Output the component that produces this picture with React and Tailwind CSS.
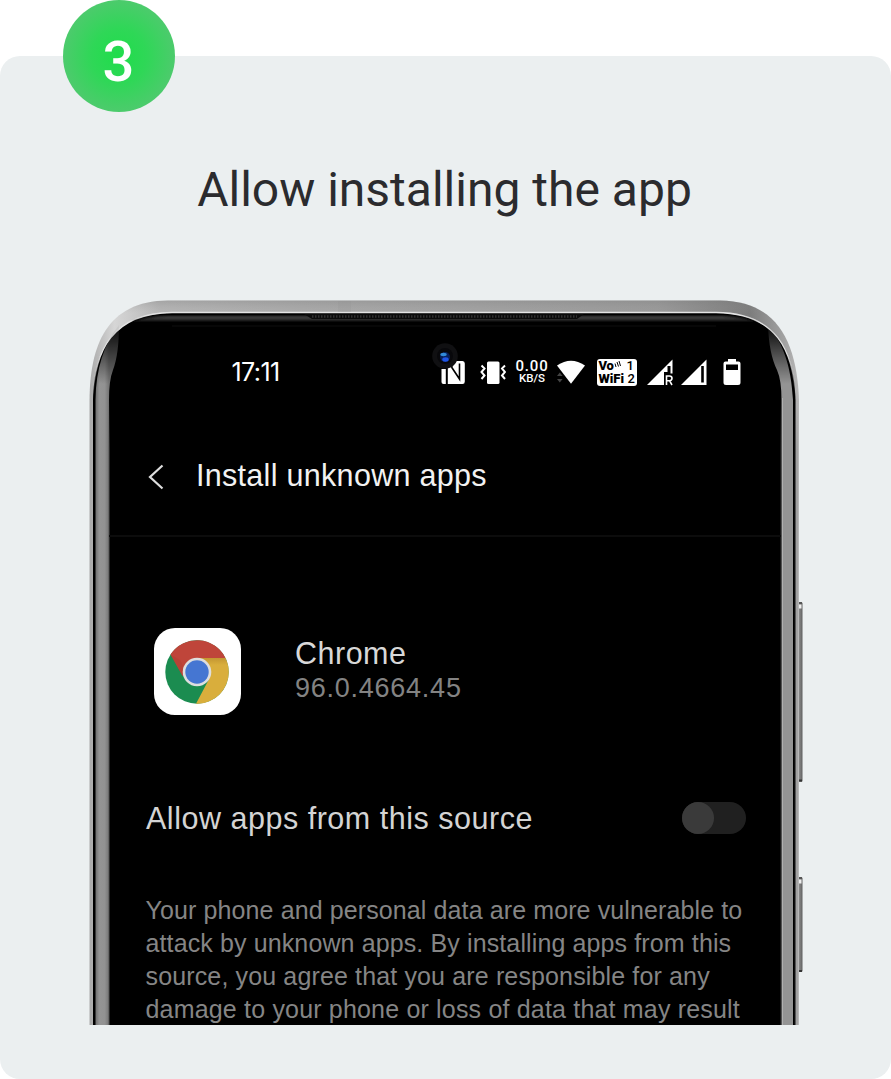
import React from "react";

function PhoneFrame() {
  return (
    <svg className="absolute inset-0 h-full w-full" viewBox="88 300 716 725" aria-hidden="true">
      <defs>
        <linearGradient id="rim" x1="0" x2="1">
          <stop offset="0" stopColor="#aaa" />
          <stop offset="0.035" stopColor="#d6d6d6" />
          <stop offset="0.1" stopColor="#b6b6b6" />
          <stop offset="0.3" stopColor="#aaaaaa" />
          <stop offset="0.8" stopColor="#9a9a9a" />
          <stop offset="0.93" stopColor="#7c7c7c" />
          <stop offset="0.98" stopColor="#a2a2a2" />
          <stop offset="1" stopColor="#b8b8b8" />
        </linearGradient>
        <linearGradient id="topShade" x1="0" y1="300" x2="0" y2="316" gradientUnits="userSpaceOnUse">
          <stop offset="0" stopColor="#777" stopOpacity="0.3" />
          <stop offset="0.8" stopColor="#999" stopOpacity="0" />
        </linearGradient>
        <linearGradient id="sideLeft" x1="95" x2="109" y1="0" y2="0" gradientUnits="userSpaceOnUse">
          <stop offset="0" stopColor="#6a6a6a" />
          <stop offset="0.3" stopColor="#949494" />
          <stop offset="0.7" stopColor="#929292" />
          <stop offset="1" stopColor="#747474" />
        </linearGradient>
        <linearGradient id="fade" x1="0" y1="322" x2="0" y2="384" gradientUnits="userSpaceOnUse">
          <stop offset="0" stopColor="#fff" stopOpacity="0" />
          <stop offset="1" stopColor="#fff" />
        </linearGradient>
        <mask id="sideMask" maskUnits="userSpaceOnUse" x="88" y="300" width="716" height="725">
          <rect x="88" y="300" width="716" height="725" fill="url(#fade)" />
        </mask>
        <linearGradient id="lineFade" x1="0" y1="395" x2="0" y2="450" gradientUnits="userSpaceOnUse">
          <stop offset="0" stopColor="#555" stopOpacity="0" />
          <stop offset="1" stopColor="#555" />
        </linearGradient>
        <linearGradient id="edge" x1="0" y1="312" x2="0" y2="396" gradientUnits="userSpaceOnUse">
          <stop offset="0" stopColor="#e4e4e4" />
          <stop offset="0.5" stopColor="#e0e0e0" />
          <stop offset="1" stopColor="#bbb" stopOpacity="0" />
        </linearGradient>
        <linearGradient id="glass" x1="0" y1="316" x2="0" y2="323" gradientUnits="userSpaceOnUse">
          <stop offset="0" stopColor="#505050" />
          <stop offset="1" stopColor="#000" />
        </linearGradient>
        <filter id="soft"><feGaussianBlur stdDeviation="1" /></filter>
        <linearGradient id="key" x1="0" x2="1">
          <stop offset="0" stopColor="#c4c4c4" />
          <stop offset="0.45" stopColor="#858585" />
          <stop offset="1" stopColor="#606060" />
        </linearGradient>
      </defs>
      <rect x="797" y="602" width="5.5" height="180" rx="1.5" fill="url(#key)" />
      <rect x="798" y="602" width="4" height="2" fill="#555" />
      <rect x="799" y="604.5" width="2.5" height="4" fill="#eee" />
      <rect x="798" y="779.5" width="4" height="2" fill="#333" />
      <rect x="797" y="877" width="5.5" height="95" rx="1.5" fill="url(#key)" />
      <rect x="798" y="877" width="4" height="2" fill="#555" />
      <rect x="799" y="879.5" width="2.500" height="4" fill="#eee" />
      <rect x="798" y="970" width="4" height="2" fill="#333" />
      <path d="M89.500 1026V400C90 346 106 301 168 300.500H720C780 301 797 346 799 400V1026Z" fill="url(#rim)" />
      <path d="M89.500 400C90 346 106 301 168 300.500H720C780 301 797 346 799 400Z" fill="url(#topShade)" />
      <path d="M93 1026V400C94 350 113 313 172 313H716C776 313 794 350 795.500 400V1026Z" fill="#000" />
      <path d="M93 400C94 350 113 313 172 312.500H716C776 313 794 350 795.500 400" fill="none" stroke="url(#edge)" strokeWidth="1.300" />
      <g mask="url(#sideMask)">
        <path d="M95.500 1026V400C96 368 104 344 119 325Q119 354 113 370Q109 380 109 400V1026Z" fill="url(#sideLeft)" />
        <path d="M793 1026V400C791 364 783 344 768 325Q769 354 777 370Q781.500 380 781.500 400V1026Z" fill="#949494" />
        <path d="M782.500 1026V398" stroke="#b0b0b0" strokeWidth="1" />
      </g>
      <path d="M109 1026V395M781.200 1026V395" stroke="url(#lineFade)" strokeWidth="1" />
      <path d="M795.300 1026V395" stroke="url(#lineFade)" strokeWidth="0.800" />
      <path d="M797 1026V395" stroke="url(#lineFade)" strokeWidth="1" opacity="0.4" />
      <path d="M132 322C144 317 158 316 174 316H716C734 316 748 318 758 323Z" fill="url(#glass)" filter="url(#soft)" />
      <path d="M304 314H584L577 319H312Z" fill="#0b0b0b" />
      <path d="M312 316.500H577" stroke="#303030" strokeWidth="2.500" strokeDasharray="1.500 1.500" />
      <path d="M172 326H716" stroke="#151515" strokeWidth="0.700" />
      <rect x="338" y="301" width="13" height="11" fill="#8d8d8d" opacity="0.15" />
    </svg>
  );
}

function Camera() {
  return (
    <svg className="absolute left-[343px] top-[42px] h-[28px] w-[28px]" viewBox="0 0 28 28" aria-hidden="true">
      <circle cx="14" cy="14" r="12.800" fill="#101012" />
      <circle cx="14" cy="14" r="8" fill="#08080b" />
      <circle cx="14" cy="15" r="5" fill="#07205c" />
      <ellipse cx="12.500" cy="12.500" rx="3.200" ry="1.700" fill="#318bd8" />
      <ellipse cx="14.500" cy="17.500" rx="3.200" ry="2.200" fill="#1f55e6" />
    </svg>
  );
}

function StatusBar() {
  return (
    <div className="relative flex h-[60px] items-center pl-[143.5px] text-white">
      <span className="w-[209.5px] font-['Inter'] text-[25px] leading-[30px] font-normal tracking-[-0.6px]">17:11</span>
      <svg className="h-[26px] w-[25px] shrink-0" viewBox="0 0 25 26" fill="none" aria-hidden="true">
        <path d="M.5 10V23Q.5 25 2.500 25H4.800V10Z" fill="#fff" />
        <path d="M6.800 25V8L13 4V2H21.500Q23.800 2 23.800 4.500V22.500Q23.800 25 21.500 25Z" fill="#fff" />
        <path d="M10.500 8L18.500 20V4.500M10.800 8V4" stroke="#000" strokeWidth="1.600" />
      </svg>
      <svg className="ml-[13.500px] h-[26px] w-[26px] shrink-0" viewBox="0 0 26 26" fill="none" stroke="#fff" strokeWidth="2" aria-hidden="true">
        <rect x="7" y="2.500" width="12.500" height="22.500" rx="1.500" fill="#fff" stroke="none" />
        <path d="M1.500 6.500L4.500 9.500L1.500 13L4.500 16.500L1.500 20M25 6.500L22 9.500L25 13L22 16.500L25 20" />
      </svg>
      <div className="ml-[9.5px] flex w-[34px] shrink-0 flex-col items-center pt-[2px] font-['Roboto']">
        <span className="text-[15px] leading-[11px] font-medium tracking-[0.8px]">0.00</span>
        <span className="text-[11.500px] leading-[13px] font-medium">KB/S</span>
      </div>
      <svg className="ml-[8px] h-[26px] w-[29px] shrink-0" viewBox="0 0 29 26" aria-hidden="true">
        <path d="M0 6.500Q14 -3 28 6.500L14 24.800Z" fill="#fff" />
        <path d="M0 17L2.800 13.500L5.600 17ZM0 20L2.800 23.500L5.600 20Z" fill="#444" />
      </svg>
      <div className="ml-[11px] flex h-[27px] w-[40px] shrink-0 flex-col rounded-[3px] bg-white pr-[2px] pl-[1.5px] font-['Roboto'] text-black">
        <div className="mt-[1.5px] flex h-[12px] items-center text-[13px] leading-[12px] font-black">
          <span className="tracking-[-0.2px]">Vo</span>
          <svg className="mb-[4px] h-[7px] w-[7px]" viewBox="0 0 7 7" fill="none" stroke="#000" aria-hidden="true">
            <path d="M1 2.500L2 6M3 1L4.500 5.500M5 0L6.500 5" />
          </svg>
          <span className="ml-auto pr-[1px] text-[13px] font-medium">1</span>
        </div>
        <div className="flex h-[13px] items-center justify-between text-[13px] leading-[13px] font-black">
          <span>WiFi</span><span className="font-medium">2</span>
        </div>
      </div>
      <svg className="ml-[9.5px] h-[27px] w-[27px] shrink-0" viewBox="0 0 27 27" aria-hidden="true">
        <path d="M0 26L25.500 .5V14.500H23.500V7H20.500V13H17V26Z" fill="#fff" />
        <path d="M19.500 26V17H22.500Q25 17 25 19.300T22.500 21.700H19.500M22.500 21.700L25 26" fill="none" stroke="#fff" strokeWidth="1.600" />
      </svg>
      <svg className="ml-[7px] h-[27px] w-[27px] shrink-0" viewBox="0 0 27 27" aria-hidden="true">
        <path d="M0 26L25.500 .5V26Z" fill="#fff" />
        <path d="M21.500 7V23.500" stroke="#000" strokeWidth="2.600" />
      </svg>
      <svg className="ml-[15px] h-[28px] w-[18px] shrink-0" viewBox="0 0 18 28" aria-hidden="true">
        <path d="M5 1H13V3.500H15.500Q17.500 3.500 17.500 5.500V24.500Q17.500 27 15 27H3Q.5 27 .5 24.500V5.500Q.5 3.500 2.500 3.500H5Z" fill="#fff" />
        <rect x="3" y="6.500" width="12" height="5.500" fill="#000" />
      </svg>
    </div>
  );
}

function ChromeIcon() {
  return (
    <svg className="h-[64px] w-[64px]" viewBox="-32 -32 64 64" aria-hidden="true">
      <defs>
        <linearGradient id="yellowShade" x1="0" y1="-14" x2="0" y2="-7" gradientUnits="userSpaceOnUse">
          <stop offset="0" stopColor="#c39632" />
          <stop offset="1" stopColor="#d9ae3c" />
        </linearGradient>
      </defs>
      <circle r="31.700" fill="#1b8c50" />
      <path d="M0 -14H28.500A31.700 31.700 0 0 1 -1 31.700L12.100 7Z" fill="url(#yellowShade)" />
      <path d="M-26.500 -17.400A31.700 31.700 0 0 1 28.500 -14H0L-14.500 4Z" fill="#bf453a" />
      <path d="M-14.500 4L-26.500 -17.400L-17 -12L-12 -2Z" fill="#a93b30" opacity="0.3" />
      <circle r="14.300" fill="#dedede" />
      <circle r="11.700" fill="#4576d2" />
    </svg>
  );
}

export default function App() {
  return (
    <div className="relative h-[1079px] w-[891px] overflow-hidden bg-white pt-[56px] font-['Liberation_Sans',sans-serif]">
      <main className="flex h-[1023px] flex-col items-center rounded-[20px] bg-[#ebeff0]">
        <h1 className="mt-[104px] mr-[2px] h-[60px] font-['Roboto'] text-[48px] leading-[60px] font-normal whitespace-nowrap text-[#2b2b2e]">
          Allow installing the app
        </h1>
        <section className="relative mt-[80px] ml-[1px] h-[725px] w-[716px] shrink-0 overflow-hidden">
          <PhoneFrame />
          <div className="relative flex flex-col pt-[42px]">
            <StatusBar />
            <header className="mr-[23px] ml-[21px] flex h-[135px] items-center border-b-2 border-[#0c0c0c] pb-0 pl-[39px]">
              <svg className="mt-[17px] h-[26px] w-[16px]" viewBox="0 0 16 26" fill="none" stroke="#dedede" strokeWidth="2.200" aria-hidden="true">
                <path d="M14.500 1.500L2 13L14.500 24.500" />
              </svg>
              <h2 className="mt-[13px] ml-[32px] text-[30.5px] leading-[36px] tracking-[0.3px] whitespace-nowrap text-[#f2f2f2]">Install unknown apps</h2>
            </header>
            <div className="mt-[91px] ml-[65.5px] flex h-[87px] items-center">
              <div className="flex h-[87px] w-[87px] items-center justify-center rounded-[21px] bg-white">
                <ChromeIcon />
              </div>
              <div className="-mt-[3px] ml-[54.5px]">
                <div className="text-[30.5px] leading-[35px] tracking-[0.5px] text-[#d8d8d8]">Chrome</div>
                <div className="text-[27px] leading-[34px] tracking-[0.75px] text-[#838383]">96.0.4664.45</div>
              </div>
            </div>
            <div className="mt-[83px] mr-[58px] ml-[58px] flex h-[40px] items-center justify-between">
              <span className="text-[30.5px] leading-[40px] tracking-[0.52px] whitespace-nowrap text-[#d4d4d4]">Allow apps from this source</span>
              <div role="switch" aria-checked="false" className="h-[32px] w-[64px] rounded-full bg-[#202020]">
                <div className="h-[32px] w-[32px] rounded-full bg-[#3a3a3a]" />
              </div>
            </div>
            <p className="mt-[56px] ml-[57.5px] flex flex-col text-[25px] leading-[33px] whitespace-nowrap text-[#858585]">
              <span className="tracking-[0.11px]">Your phone and personal data are more vulnerable to</span>
              <span className="tracking-[0.12px]">attack by unknown apps. By installing apps from this</span>
              <span className="tracking-[0.14px]">source, you agree that you are responsible for any</span>
              <span className="tracking-[0.18px]">damage to your phone or loss of data that may result</span>
            </p>
          </div>
          <Camera />
        </section>
      </main>
      <div className="absolute top-0 left-[63px] flex h-[112px] w-[112px] items-center justify-center rounded-full bg-[radial-gradient(circle_at_50%_50%,#1fdd4b_0%,#2fd757_35%,#4ccb6c_70%)]">
        <span className="mt-[11px] mr-[1px] font-['Roboto'] text-[56px] leading-[60px] font-medium text-white">3</span>
      </div>
    </div>
  );
}
